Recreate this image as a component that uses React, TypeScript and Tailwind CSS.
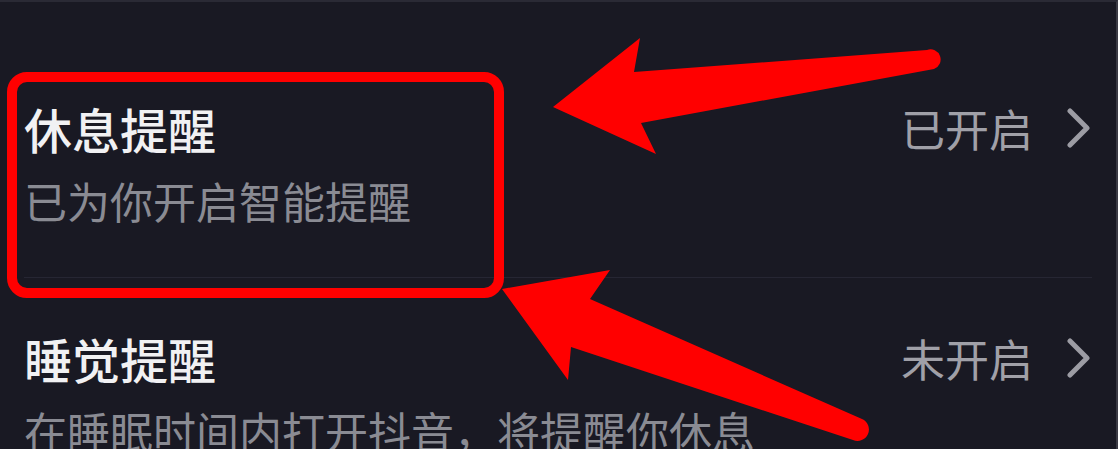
import { ReactNode } from "react";

const font = { fontFamily: '"Noto Sans CJK SC", "Noto Sans", sans-serif' };

function Chevron() {
  return (
    <svg width="26" height="40" viewBox="0 0 26 40" className="shrink-0">
      <polyline
        points="4,3 21,20 4,37"
        fill="none"
        stroke="#9c9ca4"
        strokeWidth="5"
        strokeLinecap="round"
        strokeLinejoin="round"
      />
    </svg>
  );
}

function SettingRow({ title, desc, status, divider }: { title: string; desc: ReactNode; status: string; divider?: boolean }) {
  return (
    <div className={"pt-[52px] pb-[51px] " + (divider ? "border-b border-[#262633]" : "")}>
      <div className="flex items-center justify-between">
        <span className="text-[48px] leading-[56px] font-medium text-[#f1f1f3]">{title}</span>
        <div className="flex items-center gap-[33px]">
          <span className="text-[44px] leading-[56px] text-[#a0a0a8]">{status}</span>
          <Chevron />
        </div>
      </div>
      <div className="mt-[18px] text-[43px] leading-[52px] text-[#8a8b93] whitespace-nowrap">{desc}</div>
    </div>
  );
}

export default function App() {
  return (
    <div
      className="relative w-[1118px] h-[449px] overflow-hidden bg-[#191923] border-t-2 border-t-[#2a2a35] border-r-2 border-r-[#3a3a44]"
      style={font}
    >
      <div className="pt-[46px] pl-[24px] pr-[24px]">
        <SettingRow title="休息提醒" desc="已为你开启智能提醒" status="已开启" divider />
        <SettingRow title="睡觉提醒" desc="在睡眠时间内打开抖音，将提醒你休息" status="未开启" />
      </div>

      {/* red annotation box */}
      <div className="absolute left-[7px] top-[70px] w-[497px] h-[226px] border-[10px] border-[#ff0000] rounded-[20px] pointer-events-none" />

      {/* arrows */}
      <svg className="absolute inset-0 pointer-events-none" width="1118" height="449" viewBox="0 0 1118 449">
        <path
          d="M553,105 L640,36 L634,70 L927,48 A10,10 0 0 1 934,67 L641,121 L656,152 Z"
          fill="#ff0000"
        />
        <path
          d="M502,287 L610,268 L590,297 L862,417 A11,11 0 0 1 853,438 L571,345 L568,378 Z"
          fill="#ff0000"
        />
      </svg>
    </div>
  );
}
